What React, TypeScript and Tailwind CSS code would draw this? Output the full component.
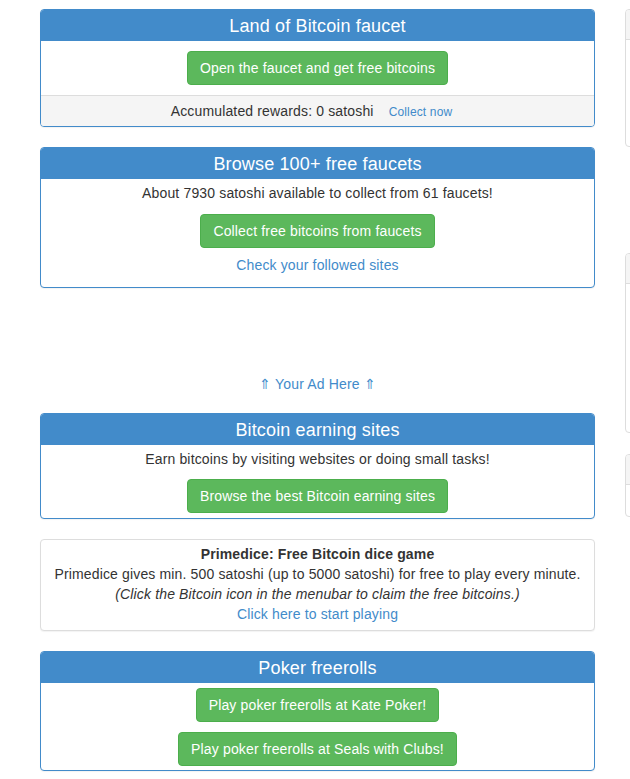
import React from 'react';

function Panel({ title, children }: { title: string; children: React.ReactNode }) {
  return (
    <div className="border border-[#428bca] rounded-[4px] bg-white overflow-hidden shadow-[0_1px_1px_rgba(0,0,0,0.05)]">
      <div className="bg-[#428bca] h-[31px] flex items-center justify-center text-white text-[18px] leading-none">
        {title}
      </div>
      {children}
    </div>
  );
}

function GreenButton({ children }: { children: React.ReactNode }) {
  return (
    <a className="inline-block bg-[#5cb85c] border border-[#4cae4c] rounded-[4px] px-[12px] py-[6px] text-white text-[14px] leading-[20px] cursor-pointer">
      {children}
    </a>
  );
}

function SidePanel({ height }: { height: number }) {
  return (
    <div
      className="border border-[#dddddd] rounded-[4px] bg-white overflow-hidden"
      style={{ height }}
    >
      <div className="bg-[#f5f5f5] h-[30px] border-b border-[#dddddd]" />
    </div>
  );
}

export default function App() {
  return (
    <div
      className="min-h-[779px] bg-white overflow-hidden text-[14px] leading-[20px] text-[#333333] tracking-[0.15px]"
      style={{ fontFamily: '"Liberation Sans", Arial, sans-serif' }}
    >
      <div className="flex pt-[9px] pl-[40px] gap-[30px] w-[900px]">
        <div className="w-[555px] shrink-0 text-center">
          <Panel title="Land of Bitcoin faucet">
            <div className="pt-[10px] pb-[10px]">
              <GreenButton>Open the faucet and get free bitcoins</GreenButton>
            </div>
            <div className="bg-[#f5f5f5] border-t border-[#dddddd] pt-[5px] pb-[4px] pr-[12px]">
              Accumulated rewards: 0 satoshi
              <a className="ml-[15px] text-[12px] text-[#428bca]">Collect now</a>
            </div>
          </Panel>

          <div className="mt-[20px]">
            <Panel title="Browse 100+ free faucets">
              <div className="pt-[4px] pb-[12px]">
                <p>About 7930 satoshi available to collect from 61 faucets!</p>
                <div className="mt-[11px]">
                  <GreenButton>Collect free bitcoins from faucets</GreenButton>
                </div>
                <a className="block mt-[7px] text-[#428bca]">Check your followed sites</a>
              </div>
            </Panel>
          </div>

          <div className="h-[86px]" />
          <a className="block text-[#428bca]">⇑ Your Ad Here ⇑</a>

          <div className="mt-[19px]">
            <Panel title="Bitcoin earning sites">
              <div className="pt-[4px] pb-[5px]">
                <p>Earn bitcoins by visiting websites or doing small tasks!</p>
                <div className="mt-[10px]">
                  <GreenButton>Browse the best Bitcoin earning sites</GreenButton>
                </div>
              </div>
            </Panel>
          </div>

          <div className="mt-[20px] border border-[#dddddd] rounded-[4px] bg-white pt-[4px] pb-[6px] shadow-[0_1px_1px_rgba(0,0,0,0.05)]">
            <p className="font-bold">Primedice: Free Bitcoin dice game</p>
            <p>Primedice gives min. 500 satoshi (up to 5000 satoshi) for free to play every minute.</p>
            <p className="italic">(Click the Bitcoin icon in the menubar to claim the free bitcoins.)</p>
            <a className="block text-[#428bca]">Click here to start playing</a>
          </div>

          <div className="mt-[20px]">
            <Panel title="Poker freerolls">
              <div className="pt-[5px] pb-[4px] flex flex-col items-center gap-[10px]">
                <GreenButton>Play poker freerolls at Kate Poker!</GreenButton>
                <GreenButton>Play poker freerolls at Seals with Clubs!</GreenButton>
              </div>
            </Panel>
          </div>
        </div>

        <div className="w-[260px] shrink-0 flex flex-col">
          <SidePanel height={138} />
          <div className="mt-[106px]">
            <SidePanel height={180} />
          </div>
          <div className="mt-[21px]">
            <SidePanel height={63} />
          </div>
        </div>
      </div>
    </div>
  );
}
